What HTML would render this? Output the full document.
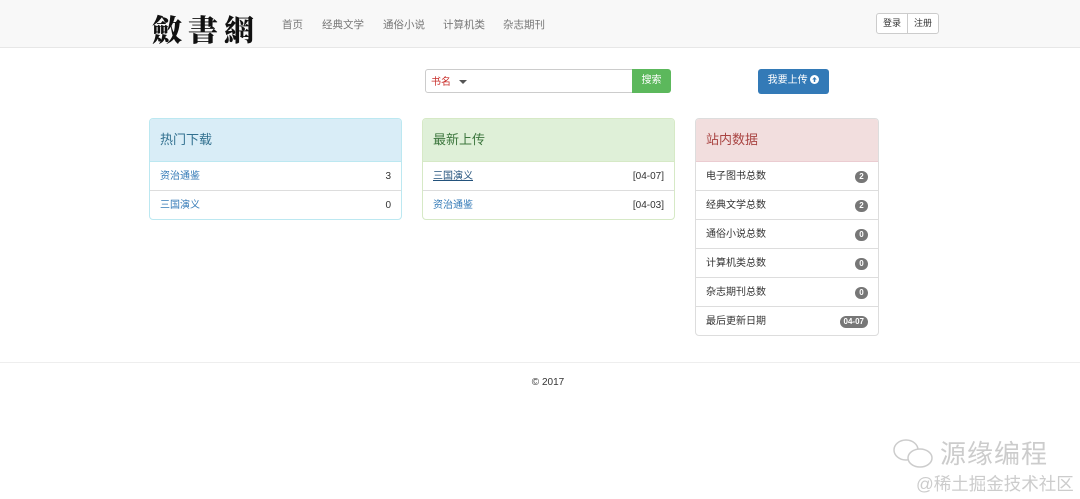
<!DOCTYPE html>
<html><head><meta charset="utf-8"><style>
*{box-sizing:border-box;margin:0;padding:0}
body{width:1080px;height:499px;background:#fff;font-family:"Liberation Sans","Noto Sans CJK SC",sans-serif;font-size:10px;color:#333;position:relative;overflow:hidden}
.nav{position:absolute;left:0;top:0;width:1080px;height:48px;background:#f8f8f8;border-bottom:1px solid #e7e7e7}
.logo{position:absolute;left:152px;top:6px;font-family:"Noto Serif CJK SC",serif;font-size:30px;font-weight:900;letter-spacing:6px;color:#111}
.nav a{position:absolute;top:17px;color:#777;font-size:10.5px;text-decoration:none}
.btns{position:absolute;left:876px;top:13px;height:21px;display:flex;border:1px solid #ccc;border-radius:3px;background:#fff}
.btns span{padding:0 6px;line-height:19px;font-size:9px;color:#333}
.btns span+span{border-left:1px solid #ccc}
.search{position:absolute;left:425px;top:69px;width:208px;height:24px;border:1px solid #ccc;border-radius:3px 0 0 3px;background:#fff}
.search .l{position:absolute;left:5px;top:3px;color:#c9302c;font-size:10px}
.tri{position:absolute;left:33px;top:10px;border-left:4px solid transparent;border-right:4px solid transparent;border-top:4px solid #555}
.sbtn{position:absolute;left:632px;top:69px;width:39px;height:24px;background:#5cb85c;color:#fff;border-radius:0 3px 3px 0;text-align:center;line-height:23px;font-size:10px}
.up{position:absolute;left:758px;top:69px;width:71px;height:25px;background:#337ab7;color:#fff;border-radius:3px;text-align:center;line-height:23px;font-size:10px}
.panel{position:absolute;top:118px;width:253px;border:1px solid;border-radius:4px;background:#fff;overflow:hidden}
.ph{height:43px;line-height:42px;padding-left:10px;font-size:13px;border-bottom:1px solid}
.row{height:29px;line-height:29px;padding:0 10px;border-top:1px solid #ddd;position:relative;font-size:10px}
.ph+.row{border-top:none;height:28px}
.row a{color:#337ab7;text-decoration:none}
.r{position:absolute;right:10px;top:0}
.badge{position:absolute;right:10px;top:9px;background:#777;color:#fff;border-radius:7px;font-size:8px;font-weight:bold;height:12px;line-height:12px;padding:0 4px;min-width:13px;text-align:center}
.foot{position:absolute;left:0;top:362px;width:1080px;border-top:1px solid #eee;text-align:center;padding-top:14px;padding-left:16px;font-size:10px}
.wm{position:absolute;left:940px;top:434px;font-size:26px;color:#ccc;letter-spacing:1px}
.wm2{position:absolute;left:916px;top:471px;font-size:17.5px;color:#ccc}
</style></head><body>
<div class="nav">
<div class="logo">斂書網</div>
<a style="left:282px">首页</a><a style="left:322px">经典文学</a><a style="left:383px">通俗小说</a><a style="left:443px">计算机类</a><a style="left:503px">杂志期刊</a>
<div class="btns"><span>登录</span><span>注册</span></div>
</div>
<div class="search"><span class="l">书名</span><span class="tri"></span></div>
<div class="sbtn">搜索</div>
<div class="up">我要上传 <svg width="9" height="9" viewBox="0 0 10 10" style="vertical-align:-1px"><circle cx="5" cy="5" r="5" fill="#fff"/><path d="M5 2.2L2.5 5h1.7v2.8h1.6V5h1.7z" fill="#337ab7"/></svg></div>

<div class="panel" style="left:149px;border-color:#bce8f1"><div class="ph" style="background:#d9edf7;color:#31708f;border-color:#bce8f1">热门下载</div>
<div class="row"><a>资治通鉴</a><span class="r">3</span></div>
<div class="row"><a>三国演义</a><span class="r">0</span></div></div>

<div class="panel" style="left:422px;border-color:#d6e9c6"><div class="ph" style="background:#dff0d8;color:#3c763d;border-color:#d6e9c6">最新上传</div>
<div class="row"><a style="text-decoration:underline;color:#23527c">三国演义</a><span class="r">[04-07]</span></div>
<div class="row"><a>资治通鉴</a><span class="r">[04-03]</span></div></div>

<div class="panel" style="left:695px;width:184px;border-color:#ddd"><div class="ph" style="background:#f2dede;color:#a94442;border-color:#ebccd1">站内数据</div>
<div class="row">电子图书总数<span class="badge">2</span></div>
<div class="row">经典文学总数<span class="badge">2</span></div>
<div class="row">通俗小说总数<span class="badge">0</span></div>
<div class="row">计算机类总数<span class="badge">0</span></div>
<div class="row">杂志期刊总数<span class="badge">0</span></div>
<div class="row">最后更新日期<span class="badge">04-07</span></div></div>

<div class="foot">© 2017</div>
<svg style="position:absolute;left:892px;top:438px" width="44" height="32" viewBox="0 0 44 32"><ellipse cx="14" cy="12" rx="12" ry="10" fill="none" stroke="#ccc" stroke-width="1.5"/><ellipse cx="28" cy="20" rx="12" ry="9" fill="#fff" stroke="#ccc" stroke-width="1.5"/></svg>
<div class="wm">源缘编程</div>
<div class="wm2">@稀土掘金技术社区</div>
</body></html>
